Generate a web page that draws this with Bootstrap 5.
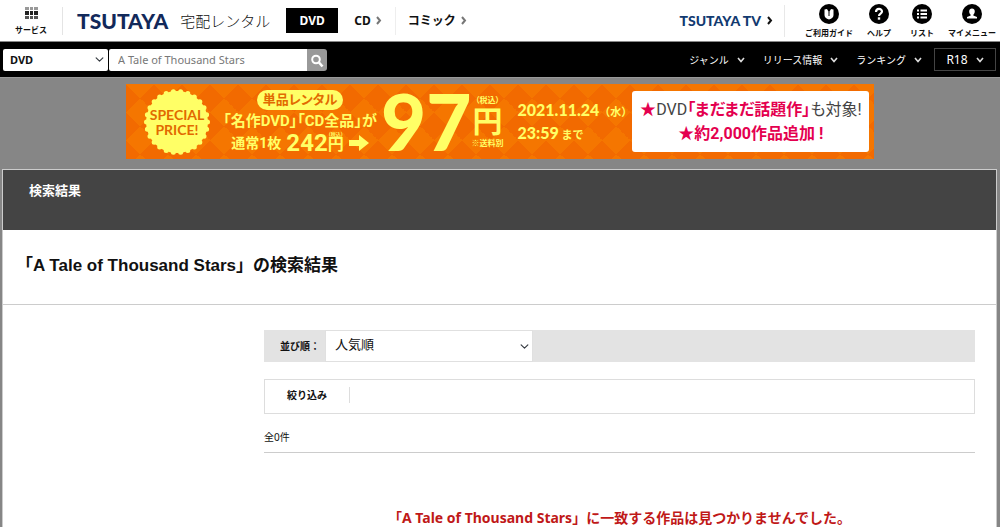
<!DOCTYPE html>
<html lang="ja">
<head>
<meta charset="utf-8">
<meta name="viewport" content="width=device-width, initial-scale=1">
<title>検索結果 - TSUTAYA 宅配レンタル</title>
<link href="https://cdn.jsdelivr.net/npm/bootstrap@5.3.0/dist/css/bootstrap.min.css" rel="stylesheet">
<style>
body{font-family:"Noto Sans","Noto Sans CJK JP",sans-serif;background:#868686;color:#111;font-size:10px;line-height:16px;overflow-x:hidden}
a{color:inherit;text-decoration:none}
.site-top{min-height:42px;border-bottom:1px solid #888;white-space:nowrap}
.service-link{width:63px;border-right:1px solid #e4e4e4;height:28px}
.tiny-label{font-size:8px;line-height:10px;font-weight:700}
.brand-logo{font:900 21px/24px Lato,sans-serif;color:#12295a;margin-left:14px}
.brand-sub{font-size:15px;line-height:24px;font-weight:300;margin-left:12px}
.tab-dvd{background:#000;color:#fff;font-size:12px;font-weight:700;width:52px;height:25px;margin-left:16px}
.tab-item{font-size:12px;font-weight:700;gap:5px}
.tab-cd{padding:0 13px 0 16px;border-right:1px solid #eee;height:28px}
.tv-link{font:900 14px/20px Lato,sans-serif;color:#123a70;gap:6px}
.tv-rule{border-left:1px solid #e8e8e8;height:32px;margin:0 20px 0 11px}
.user-nav{gap:9px}
.user-nav a{min-width:34px}
.search-bar{background:#000;min-height:36px;border-bottom:1px solid #999;color:#fff;white-space:nowrap;padding:6px 4px 6px 3px}
.chev-select{background-color:#fff;border:0;border-radius:0;color:#111;background-size:9px 9px}
.kind-select{width:105px;height:22px;font-size:11px;line-height:16px;font-weight:700;padding:2px 20px 2px 7px;background-position:right 4px center;border-radius:2px}
.search-group{width:218px;height:22px;margin-left:1px}
.search-group .form-control{border:0;font-size:11px;line-height:16px;padding:2px 9px;color:#777;border-radius:2px 0 0 2px;min-height:22px}
.search-group .form-control::placeholder{color:#777}
.search-group .btn{background:#999;width:20px;padding:0;border:0;border-radius:0 3px 3px 0;line-height:1}
.genre-nav{font-size:10px;gap:18px}
.genre-nav a{gap:8px}
.r18-link{border:1px solid #444;width:62px;height:23px;margin-left:-6px;font-size:12px}
.promo{max-width:748px;min-height:75px;margin:6px auto 10px;color:#ff6;white-space:nowrap;background-color:#f26a00;
 background-image:conic-gradient(from 135deg at 50% 50%,#f57600 90deg,transparent 0),conic-gradient(from -45deg at 50% 50%,#f57600 90deg,transparent 0);
 background-size:28px 28px;font-family:Roboto,"Noto Sans CJK JP",sans-serif;font-weight:700;font-feature-settings:"palt"}
.promo>div{flex-shrink:0}
.burst{width:68px;height:68px;margin-left:17px}
.burst-text{font:700 14px/15px Lato,sans-serif;color:#e26a00}
.offer{width:150px;margin-left:14px}
.offer-pill{background:#ff6;color:#e26a00;font-size:13px;line-height:20px;border-radius:10px;width:86px;text-align:center}
.offer-line{font-size:15px;line-height:22px}
.offer-price{font-size:14px;line-height:22px;gap:5px}
.offer-num{font-size:24px}
.yen-stack{font-size:16px;line-height:16px}
.yen-stack small{font-size:5px;line-height:5px}
.big-price{font:900 78px/75px Lato,sans-serif;margin-left:6px}
.big-yen{font-size:30px;line-height:30px}
.big-yen small{font-size:8px;line-height:13px}
.deadline{font:900 16px/21px Lato,"Noto Sans CJK JP",sans-serif;margin-left:14px}
.deadline span{font-size:11px;font-weight:700}
.notice{background:#fff;color:#e4004f;border-radius:3px;width:237px;height:61px;margin-right:5px;font-size:16px;line-height:24px}
.notice span{color:#444;font-weight:400}
.panel{background:#fff;margin:0 3px 0 2px;border:1px solid #ccc;min-height:358px}
.panel-head{background:#444;color:#fff;min-height:60px;padding:11px 26px;font-size:13px;line-height:18px;font-weight:700}
.result-title{font:700 17px/24px "Liberation Sans","Noto Sans CJK JP",sans-serif;padding:24px 13px 26px;margin:0;border-bottom:1px solid #ccc}
.result-body{padding:25px 21px 0 261px}
.sort-row{background:#e3e3e3;min-height:32px}
.sort-row label{width:61px;padding-left:16px;font-weight:700}
.sort-select{width:208px;height:32px;border:1px solid #e0e0e0;font-size:13px;line-height:20px;padding:3px 24px 7px 9px;background-position:right 3px center}
.filter-row{border:1px solid #ddd;min-height:35px;margin-top:17px;padding:0 0 3px 22px}
.filter-row strong{width:63px;border-right:1px solid #ddd}
.count{margin:15px 0 0;padding-bottom:7px;border-bottom:1px solid #ccc}
.no-result{margin:55px 0 0;color:#c01818;font-size:14px;line-height:20px;font-weight:700}
</style>
</head>
<body>
<header class="site-top bg-white d-flex align-items-center">
  <a href="#" class="service-link d-flex flex-column align-items-center justify-content-between">
    <svg width="13" height="12" viewBox="0 0 13 12"><path fill="#999" d="M0 0h4v3H0zM5 0h3v3H5zM9 0h4v3H9z"/><path d="M0 4h4v4H0zM5 4h3v4H5zM9 4h4v4H9z" fill="#222"/><path d="M0 9h4v3H0zM5 9h3v3H5zM9 9h4v3H9z" fill="#555"/></svg>
    <span class="tiny-label">サービス</span>
  </a>
  <a href="#" class="brand-logo">TSUTAYA</a>
  <a href="#" class="brand-sub">宅配レンタル</a>
  <a href="#" class="tab-dvd d-flex align-items-center justify-content-center">DVD</a>
  <a href="#" class="tab-item tab-cd d-flex align-items-center">CD <svg width="6" height="9" viewBox="0 0 6 9"><path d="M1 1l3 3.500L1 8" fill="none" stroke="#777" stroke-width="2"/></svg></a>
  <a href="#" class="tab-item d-flex align-items-center ms-2 ps-1">コミック <svg width="6" height="9" viewBox="0 0 6 9"><path d="M1 1l3 3.500L1 8" fill="none" stroke="#777" stroke-width="2"/></svg></a>
  <a href="#" class="tv-link d-flex align-items-center ms-auto">TSUTAYA TV <svg width="6" height="9" viewBox="0 0 6 9"><path d="M1 1l3 3.500L1 8" fill="none" stroke="#111" stroke-width="2"/></svg></a>
  <span class="tv-rule"></span>
  <nav class="user-nav d-flex text-center me-1">
    <a href="#" class="d-flex flex-column align-items-center gap-1"><svg width="20" height="20" viewBox="0 0 20 20"><circle cx="10" cy="10" r="10"/><path d="M5.500 5.500L8 5l2 3.500L12 5l2.500.5v5.500q0 3-4.500 4.500q-4.500-1.500-4.500-4.500z" fill="#fff"/><path d="M10 8v4" stroke="#000"/></svg><span class="tiny-label">ご利用ガイド</span></a>
    <a href="#" class="d-flex flex-column align-items-center gap-1"><svg width="20" height="20" viewBox="0 0 20 20"><circle cx="10" cy="10" r="10"/><path d="M7 8c0-4 6-4 6-.500 0 2.200-3 2-3 4.500" fill="none" stroke="#fff" stroke-width="2.200"/><path d="M8.800 13.300h2.400v2.400H8.800z" fill="#fff"/></svg><span class="tiny-label">ヘルプ</span></a>
    <a href="#" class="d-flex flex-column align-items-center gap-1"><svg width="20" height="20" viewBox="0 0 20 20"><circle cx="10" cy="10" r="10"/><path d="M5 6.500h2M5 10h2M5 13.500h2M8.500 6.500H15M8.500 10H15M8.500 13.500H15" stroke="#fff" stroke-width="1.800"/></svg><span class="tiny-label">リスト</span></a>
    <a href="#" class="d-flex flex-column align-items-center gap-1"><svg width="20" height="20" viewBox="0 0 20 20"><circle cx="10" cy="10" r="10"/><path d="M10 4.500c3.500 0 3.500 4.500 1.300 6.200v.8l3.700 1.500v1.500H5V13l3.700-1.500v-.8C6.500 9 6.500 4.500 10 4.500z" fill="#fff"/></svg><span class="tiny-label">マイメニュー</span></a>
  </nav>
</header>

<div class="search-bar d-flex align-items-center">
  <form class="d-flex" role="search">
    <select class="form-select chev-select kind-select" aria-label="カテゴリ"><option>DVD</option></select>
    <div class="search-group input-group flex-nowrap">
      <input type="text" class="form-control" placeholder="A Tale of Thousand Stars" aria-label="キーワード">
      <button type="button" class="btn" aria-label="検索"><svg width="14" height="14" viewBox="0 0 14 14" fill="none" stroke="#fff" stroke-width="2"><circle cx="6" cy="5.500" r="3.800"/><path d="M9 8.500l3.500 4" stroke-width="2.600"/></svg></button>
    </div>
  </form>
  <nav class="genre-nav d-flex align-items-center ms-auto">
    <a href="#" class="d-flex align-items-center">ジャンル <svg width="8" height="6" viewBox="0 0 8 6"><path d="M1 1l3 3.500L7 1" fill="none" stroke="#ddd" stroke-width="1.600"/></svg></a>
    <a href="#" class="d-flex align-items-center">リリース情報 <svg width="8" height="6" viewBox="0 0 8 6"><path d="M1 1l3 3.500L7 1" fill="none" stroke="#ddd" stroke-width="1.600"/></svg></a>
    <a href="#" class="d-flex align-items-center">ランキング <svg width="8" height="6" viewBox="0 0 8 6"><path d="M1 1l3 3.500L7 1" fill="none" stroke="#ddd" stroke-width="1.600"/></svg></a>
    <a href="#" class="r18-link d-flex align-items-center justify-content-center">R18 <svg width="8" height="6" viewBox="0 0 8 6"><path d="M1 1l3 3.500L7 1" fill="none" stroke="#ddd" stroke-width="1.600"/></svg></a>
  </nav>
</div>

<a href="#" class="promo d-flex align-items-center">
  <div class="burst position-relative d-flex align-items-center justify-content-center">
    <svg class="position-absolute top-0 start-0" width="68" height="68" viewBox="0 0 68 68"><circle cx="34" cy="34" r="31" fill="#ff6"/><circle cx="34" cy="34" r="30.500" fill="none" stroke="#ff6" stroke-width="5" stroke-linecap="round" pathLength="26" stroke-dasharray="0 1"/></svg>
    <div class="burst-text position-relative text-center">SPECIAL<br>PRICE!</div>
  </div>
  <div class="offer d-flex flex-column align-items-center">
    <div class="offer-pill">単品レンタル</div>
    <div class="offer-line">「名作DVD」「CD全品」が</div>
    <div class="offer-price d-flex align-items-center">通常1枚 <span class="d-flex"><span class="offer-num">242</span><span class="yen-stack d-flex flex-column align-items-center"><small>(税込)</small>円</span></span>
      <svg width="20" height="18" viewBox="0 0 20 18"><path d="M0 6h10V1l10 8-10 8v-5H0z" fill="#ff6"/></svg></div>
  </div>
  <div class="big-price">97</div>
  <div class="big-yen d-flex flex-column align-items-center"><small>（税込）</small>円<small>※送料別</small></div>
  <div class="deadline">2021.11.24<span>（水）</span><br>23:59<span> まで</span></div>
  <div class="notice ms-auto d-flex flex-column justify-content-center text-center"><div>★<span>DVD</span>「まだまだ話題作」<span>も対象!</span></div><div>★約2,000作品追加 !</div></div>
</a>

<main class="panel">
  <div class="panel-head">検索結果</div>
  <h1 class="result-title">「A Tale of Thousand Stars」の検索結果</h1>
  <div class="result-body">
    <div class="sort-row d-flex align-items-center">
      <label for="sort">並び順：</label>
      <select id="sort" class="form-select chev-select sort-select"><option>人気順</option></select>
    </div>
    <div class="filter-row d-flex align-items-center"><strong>絞り込み</strong></div>
    <p class="count">全0件</p>
    <p class="no-result text-center">「A Tale of Thousand Stars」に一致する作品は見つかりませんでした。</p>
  </div>
</main>
<script src="https://cdn.jsdelivr.net/npm/bootstrap@5.3.0/dist/js/bootstrap.bundle.min.js"></script>
</body>
</html>
